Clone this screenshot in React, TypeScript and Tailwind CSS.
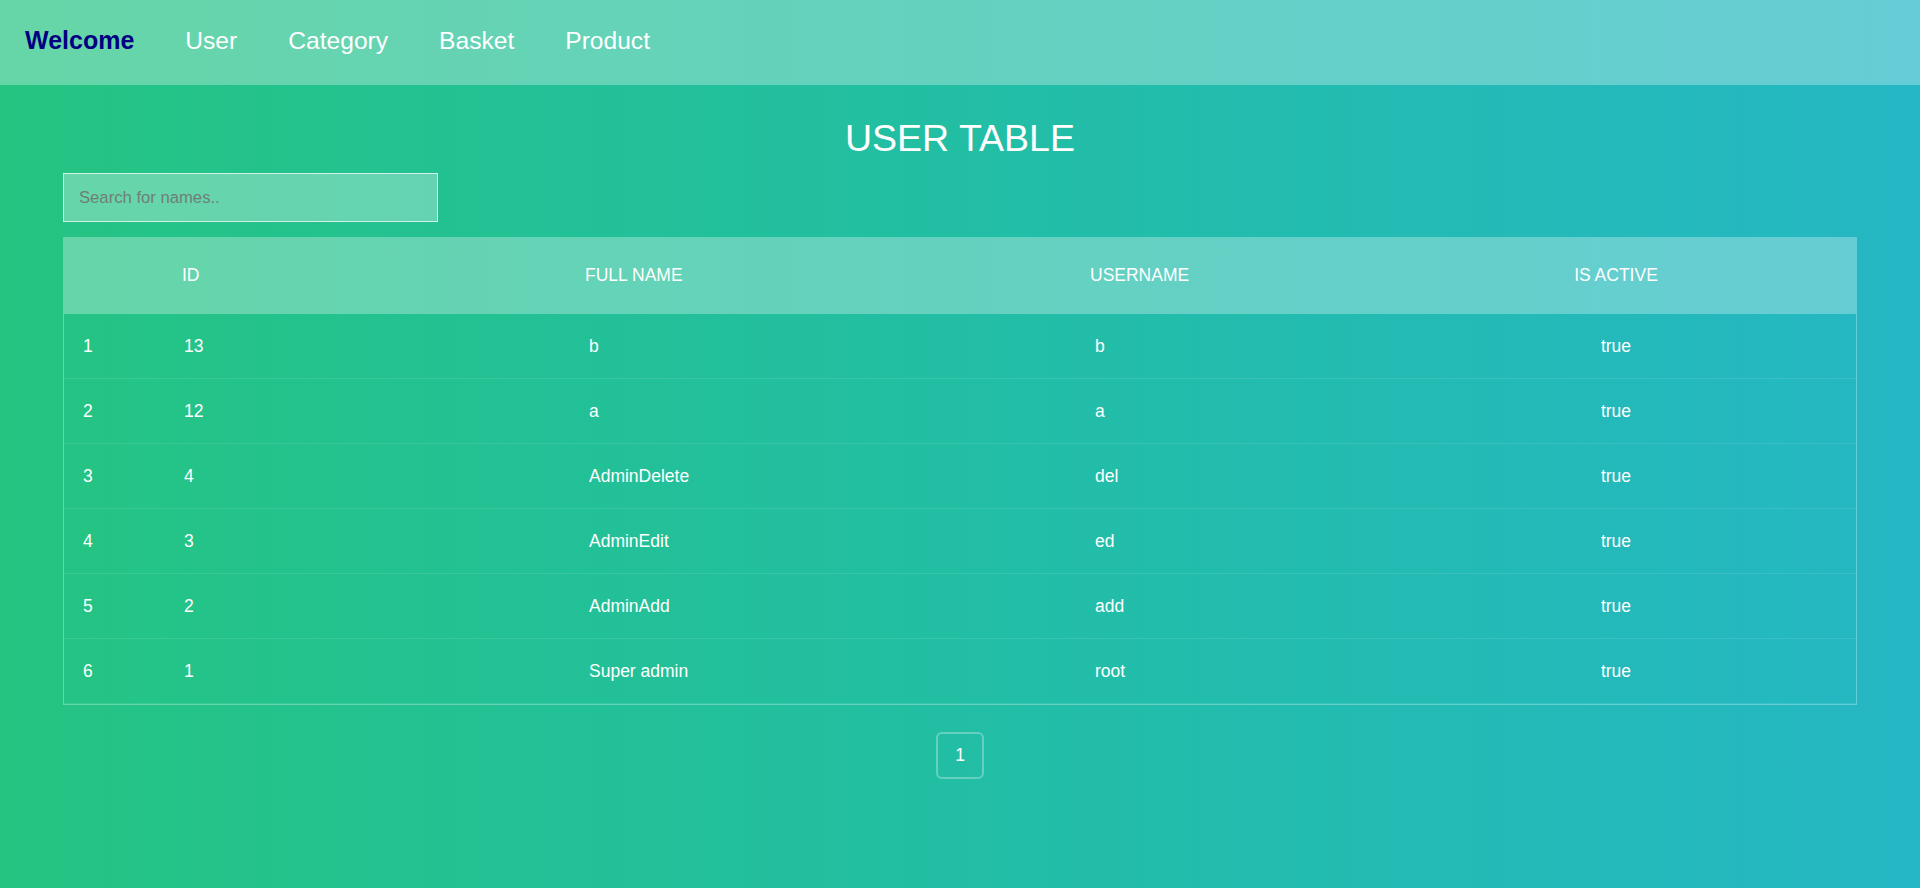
const users = [
  { n: 1, id: 13, fullName: "b", username: "b", active: true },
  { n: 2, id: 12, fullName: "a", username: "a", active: true },
  { n: 3, id: 4, fullName: "AdminDelete", username: "del", active: true },
  { n: 4, id: 3, fullName: "AdminEdit", username: "ed", active: true },
  { n: 5, id: 2, fullName: "AdminAdd", username: "add", active: true },
  { n: 6, id: 1, fullName: "Super admin", username: "root", active: true },
];

const cols = "grid grid-cols-[101px_406px_506px_299px_1fr]";

export default function App() {
  return (
    <div className="min-h-screen bg-gradient-to-r from-[#25c481] to-[#25b7c4] font-['Liberation_Sans',Arial,sans-serif] text-white">
      {/* top nav */}
      <nav className="flex h-[85px] items-center gap-[51px] bg-white/30 pb-[3px] pl-[25px] text-[24.6px]">
        <a href="#" className="text-[25px] font-bold text-[#000080]">
          Welcome
        </a>
        <a href="#">User</a>
        <a href="#">Category</a>
        <a href="#">Basket</a>
        <a href="#">Product</a>
      </nav>

      <section className="px-[63px]">
        <h1 className="mt-[31px] h-[45px] text-center text-[37.5px] leading-[45px] font-light uppercase">
          User Table
        </h1>

        <input
          type="text"
          placeholder="Search for names.."
          className="mt-[12px] h-[49px] w-[375px] border border-white/70 bg-white/30 px-[15px] text-[16.67px] text-white outline-none placeholder:text-[#6f7f78]"
        />

        <div className="mt-[15px]">
          <div className={`${cols} h-[77px] items-center border-x border-transparent bg-white/30 text-[17.5px] uppercase`}>
            <div />
            <div className="pl-[17px]">ID</div>
            <div className="pl-[14px]">Full Name</div>
            <div className="pl-[13px]">Username</div>
            <div className="text-center">Is Active</div>
          </div>

          <div className="border-x border-b border-white/30">
            {users.map((u) => (
              <div
                key={u.n}
                className={`${cols} h-[65px] items-center border-b border-white/10 text-[17.5px]`}
              >
                <div className="pl-[19px]">{u.n}</div>
                <div className="pl-[19px]">{u.id}</div>
                <div className="pl-[18px]">{u.fullName}</div>
                <div className="pl-[18px]">{u.username}</div>
                <div className="text-center">{u.active ? "true" : "false"}</div>
              </div>
            ))}
          </div>
        </div>

        <div className="mt-[27px] flex justify-center">
          <button className="flex h-[47px] w-[48px] items-center justify-center rounded-[6px] border-2 border-white/30 text-[17.5px] text-white">
            1
          </button>
        </div>
      </section>
    </div>
  );
}
